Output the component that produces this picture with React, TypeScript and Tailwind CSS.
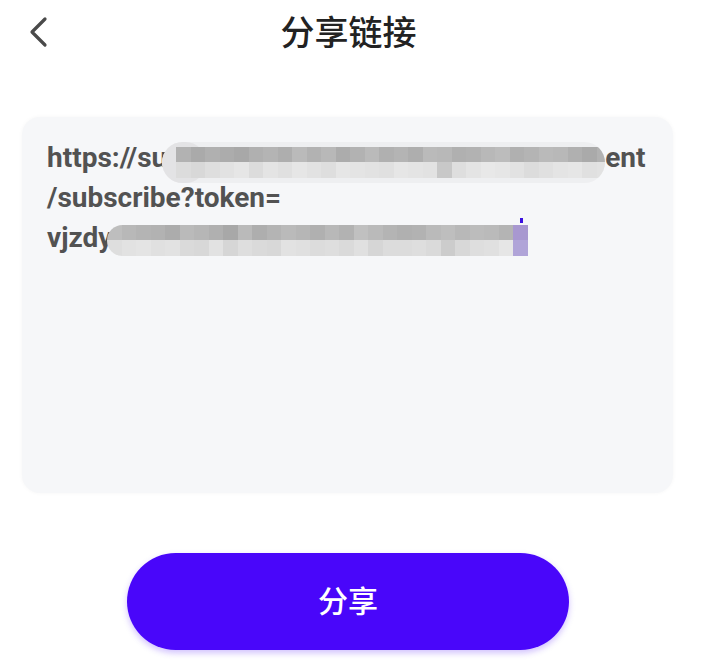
import React from "react";

const top1 = [178,170,176,172,168,176,180,174,186,178,184,172,178,186,176,180,174,186,184,176,178,184,188,176,180,186,184,176,170,178];
const bot1 = [220,216,222,226,230,220,228,224,230,226,222,230,228,226,224,230,228,226,200,222,228,232,230,226,220,224,228,230,224,226];
const top3 = [190,184,180,178,172,186,182,176,168,186,174,180,186,182,176,184,178,192,186,180,176,178,186,190,184,188,186,180];
const bot3 = [222,226,228,224,226,218,216,226,214,222,218,216,226,224,220,222,218,224,214,220,220,222,218,204,216,222,224,230];

function Mosaic({ top, bot, cell }: { top: number[]; bot: number[]; cell: number }) {
  return (
    <div className="flex flex-col">
      <div className="flex">
        {top.map((v, i) => (
          <div key={i} style={{ width: cell, height: 15, background: `rgb(${v},${v},${v})` }} />
        ))}
      </div>
      <div className="flex">
        {bot.map((v, i) => (
          <div key={i} style={{ width: cell, height: 16, background: `rgb(${v},${v},${v})` }} />
        ))}
      </div>
    </div>
  );
}

export default function App() {
  return (
    <div
      className="relative w-[701px] h-[661px] bg-white overflow-hidden"
      style={{ fontFamily: 'Roboto, "Noto Sans CJK SC", sans-serif' }}
    >
      {/* Header */}
      <div className="relative h-[66px] flex items-center justify-center">
        <svg
          className="absolute left-[27px] top-[16px]"
          width="24"
          height="32"
          viewBox="0 0 24 32"
          fill="none"
        >
          <path d="M18 3 L5 16 L18 29" stroke="#4a4a4a" strokeWidth="3.2" strokeLinecap="round" strokeLinejoin="round" />
        </svg>
        <div className="text-[34px] leading-none font-medium text-[#222222] ml-[-4px]">分享链接</div>
      </div>

      {/* Card */}
      <div className="ml-[22px] mt-[51px] w-[651px] h-[376px] rounded-[18px] bg-[#f6f7f9] shadow-[0_0_4px_rgba(0,0,0,0.04)] pl-[25px] pt-[21px]">
        <div className="text-[28px] leading-[40px] font-bold text-[#525252]">
          <div className="flex items-center h-[40px]">
            <span>https://su</span>
            <div className="relative top-[4px] ml-[-5px] h-[41px] w-[443px] rounded-full bg-[#eeeff1] overflow-hidden flex items-center">
              <div className="absolute left-[-4px] top-[0px] w-[48px] h-[41px] rounded-full bg-[#e3e3e5]" />
              <div className="relative ml-[14px]">
                <Mosaic top={top1} bot={bot1} cell={14.5} />
              </div>
            </div>
            <span className="relative">ent</span>
          </div>
          <div className="h-[40px]">/subscribe?token=</div>
          <div className="flex items-center h-[40px]">
            <span>vjzdy</span>
            <div className="relative top-[2px] ml-[-5px] h-[32px] flex items-center">
              <div className="rounded-l-full overflow-hidden">
                <Mosaic top={top3} bot={bot3} cell={14.5} />
              </div>
              <div className="flex flex-col">
                <div className="w-[15px] h-[15px] bg-[#a898d0]" />
                <div className="w-[15px] h-[16px] bg-[#b0a4d8]" />
              </div>
              <div className="absolute right-[5px] top-[-6px] w-[3px] h-[5px] bg-[#3a10e0]" />
            </div>
          </div>
        </div>
      </div>

      {/* Button */}
      <button className="ml-[127px] mt-[60px] w-[442px] h-[97px] rounded-full bg-[#4906fa] shadow-[0_3px_6px_rgba(73,6,250,0.25)] flex items-center justify-center text-white text-[30px] font-medium leading-none">
        分享
      </button>
    </div>
  );
}
